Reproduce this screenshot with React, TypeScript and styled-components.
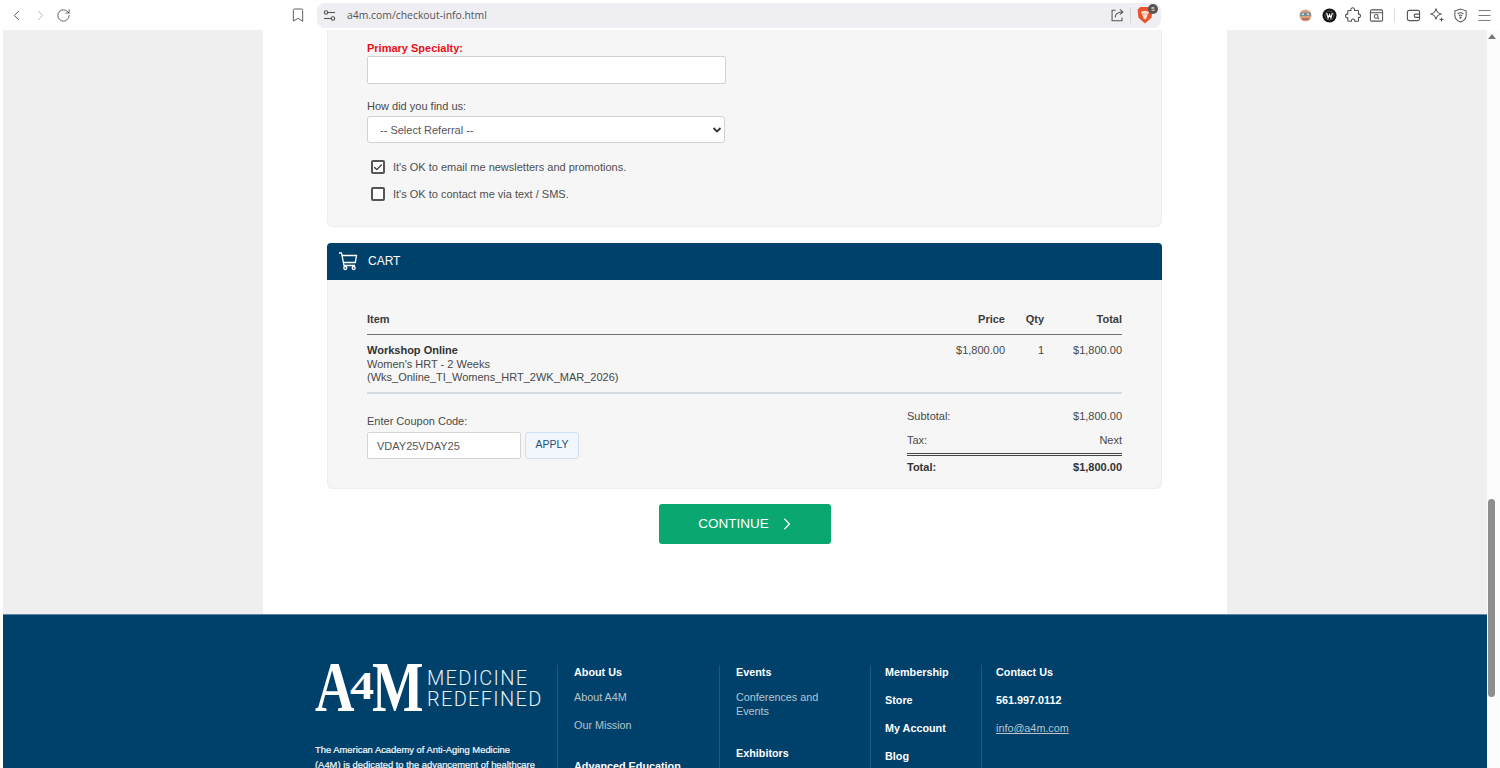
import React from "react";
import styled, { createGlobalStyle } from "styled-components";
import { ChevronLeft, ChevronRight, RotateCw, Bookmark, Menu, Check } from "lucide-react";

const Global = createGlobalStyle`
  html, body { margin: 0; padding: 0; background: #fff; overflow: hidden; }
  * { box-sizing: border-box; }
  body { font-family: "Liberation Sans", Arial, sans-serif; font-size: 11px; color: #484848; }
`;

const Shell = styled.div`
  width: 1500px; height: 768px; overflow: hidden; display: flex; flex-direction: column; background: #fff;
`;
const Toolbar = styled.div`
  height: 30px; flex: none; display: flex; align-items: center; background: #fff; color: #555;
`;
const NavGroup = styled.div`
  display: flex; align-items: center; gap: 6.5px; padding-left: 8px; width: 297px;
`;
const ToolIcon = styled.span<{ $dim?: boolean }>`
  width: 17px; height: 18px; display: flex; align-items: center; justify-content: center; flex: none;
  color: ${p => (p.$dim ? "#b5b5b5" : "#555")};
`;
const BookmarkSlot = styled(ToolIcon)`
  margin-left: auto; margin-right: -9px;
`;
const AddressBar = styled.div`
  width: 844px; height: 25px; margin-left: 20px; background: #eeeef3; border-radius: 8px; display: flex; align-items: center; padding: 0 6px 0 4px;
`;
const Url = styled.span`
  font-family: "Open Sans", "Noto Sans", sans-serif; font-size: 10.4px; color: #555; margin-left: 9px; flex: 1;
`;
const TinySep = styled.span`
  width: 1px; height: 16px; background: #d6d6da; margin: 0 5px 0 4px;
`;
const BraveWrap = styled.span`
  position: relative; width: 18px; height: 18px; display: block; margin-left: 1px;
`;
const BraveBadge = styled.span`
  position: absolute; right: -3px; top: -2px; width: 10px; height: 10px; border-radius: 50%; background: #555; color: #fff; font-size: 6px; line-height: 10px; text-align: center;
`;
const RightGroup = styled.div`
  display: flex; align-items: center; gap: 6.6px; margin-left: 136px;
`;
const Divider = styled.span`
  width: 1px; height: 14px; background: #dcdcdc; margin: 0 3px;
`;

const Body = styled.div`
  flex: 1; display: flex; min-height: 0;
`;
const EdgeStrip = styled.div`
  width: 3px; flex: none; background: #fff;
`;
const Page = styled.div`
  flex: 1; min-width: 0; display: flex; flex-direction: column;
`;
const Scrollbar = styled.div`
  width: 13px; flex: none; background: #fcfcfc; display: flex; flex-direction: column; align-items: center; padding-right: 4px;
`;
const ScrollArrow = styled.span`
  width: 0; height: 0; margin-top: 4px; border-left: 4px solid transparent; border-right: 4px solid transparent; border-bottom: 5px solid #777;
`;
const ScrollThumb = styled.span`
  width: 7px; height: 198px; margin-top: 460px; border-radius: 4px; background: #8e8e8e;
`;
const Backdrop = styled.div`
  height: 584px; background: #efefef; display: flex; justify-content: center; flex: none;
`;
const Content = styled.main`
  width: 964px; background: #fff; padding: 0 65px 0 64px;
`;
const Card = styled.section`
  background: #f6f6f6; border: 1px solid #eeeeee; border-top: 0; border-radius: 0 0 6px 6px; height: 197px; padding: 11px 39px 0;
`;
const Label = styled.label<{ $required?: boolean; $inset?: boolean }>`
  display: block; font-size: 11px; line-height: 14px; color: ${p => (p.$required ? "#e8101a" : "#4a4a4a")}; font-weight: ${p => (p.$required ? 700 : 400)};
  margin-top: ${p => (p.$inset ? "6px" : "0")};
`;
const TextBox = styled.div`
  width: 359px; height: 28px; margin: 1px 0 15px; background: #fff; border: 1px solid #d2d2d2; border-radius: 2px;
`;
const SelectBox = styled.div`
  width: 358px; height: 27px; margin-top: 3px; background: #fff; border: 1px solid #d2d2d2; border-radius: 3px; display: flex; align-items: center; justify-content: space-between; padding: 0 2px 0 12px; color: #555; font-size: 11px;
`;
const CheckRow = styled.div<{ $first?: boolean }>`
  display: flex; align-items: center; gap: 8px; height: 14px; margin: ${p => (p.$first ? "17px" : "13px")} 0 0 4px; font-size: 11px; color: #4f4f4f;
`;
const CheckBox = styled.span`
  width: 14px; height: 14px; border: 2px solid #555; border-radius: 2px; background: #fff; display: flex; align-items: center; justify-content: center; color: #333; flex: none;
`;
const CartHead = styled.div`
  margin-top: 16px; height: 37px; background: #00416b; border-radius: 4px 4px 0 0; display: flex; align-items: center; padding: 0 0 1px 11px; gap: 10px; color: #fff; font-size: 12px;
`;
const CartBody = styled.section`
  background: #f6f6f6; border: 1px solid #eeeeee; border-top: 0; border-radius: 0 0 6px 6px; height: 209px; padding: 32px 39px 0;
`;
const ItemRow = styled.div<{ $head?: boolean }>`
  display: grid; grid-template-columns: 1fr 60px 39px 78px; line-height: 14px;
  ${p => p.$head ? "font-weight: 700; color: #3c3c3c; height: 23px; border-bottom: 1px solid #707070; padding-bottom: 6px; align-items: start;" : "height: 59px; padding-top: 9px; border-bottom: 2px solid #d7dce3; line-height: 13.5px;"}
`;
const Cell = styled.div`
  text-align: right;
`;
const ItemName = styled.strong`
  display: block; color: #333;
`;
const LowerRow = styled.div`
  display: flex; justify-content: space-between; padding-top: 14px;
`;
const Coupon = styled.div``;
const CouponRow = styled.div`
  display: flex; gap: 4px; margin-top: 4px;
`;
const CouponInput = styled.div`
  width: 154px; height: 27px; background: #fff; border: 1px solid #d5d5d5; border-radius: 2px; padding-left: 9px; display: flex; align-items: center; color: #555;
`;
const ApplyButton = styled.button`
  width: 54px; height: 27px; background: #f1f7fc; border: 1px solid #cfe0f0; border-radius: 3px; color: #1f4f74; font: 10.5px "Liberation Sans", Arial, sans-serif; padding: 0 0 4px;
`;
const Totals = styled.div`
  width: 215px; padding-top: 1px;
`;
const TotalRow = styled.div<{ $strong?: boolean }>`
  display: flex; justify-content: space-between; line-height: 14px; height: ${p => (p.$strong ? "auto" : "24px")}; font-weight: ${p => (p.$strong ? 700 : 400)};
  ${p => p.$strong ? "border-top: 3px double #444; padding-top: 4px; color: #333;" : ""}
`;
const Tax = styled(TotalRow)`
  height: 20px;
`;
const ContinueWrap = styled.div`
  display: flex; justify-content: center; margin-top: 15px;
`;
const ContinueButton = styled.button`
  width: 172px; height: 40px; background: #0aa770; border: 0; border-radius: 3px; color: #fff; font: 13.5px "Liberation Sans", Arial, sans-serif; display: flex; align-items: center; justify-content: center; gap: 8px; padding: 0 0 1px 6px;
`;

const Footer = styled.footer`
  flex: 1; background: #00416b; border-top: 1px solid #5d87a5; padding: 50px 0 0 312px; display: flex; align-items: flex-start; color: #fff; overflow: hidden;
`;
const Brand = styled.div`
  width: 242px; flex: none;
`;
const Logo = styled.div`
  display: flex; align-items: center; height: 48px; gap: 4px;
`;
const LogoMark = styled.span`
  position: relative; display: block; width: 108px; height: 48px; flex: none; font-family: "Liberation Serif", serif; font-weight: 700; color: #fff;
`;
const LogoLetter = styled.span<{ $x: number; $size: number; $y: number; $sx: number }>`
  position: absolute; left: ${p => p.$x}px; top: ${p => p.$y}px; font-size: ${p => p.$size}px; line-height: 1; transform: scaleX(${p => p.$sx}); transform-origin: left top;
`;
const LogoWords = styled.span`
  font-family: Roboto, sans-serif; font-weight: 300; font-size: 20px; line-height: 21.5px; letter-spacing: 1.3px; color: #e8eff4; white-space: nowrap;
`;
const BrandText = styled.p`
  margin: 29px 0 0; font-size: 9.4px; line-height: 15px; font-weight: 400; width: 235px; color: #f7fafb; -webkit-text-stroke: 0.2px #f7fafb;
`;
const FootCol = styled.div<{ $w: number; $pad: number }>`
  width: ${p => p.$w}px; flex: none; border-left: 1px solid #1d5a80; padding-left: ${p => p.$pad}px; height: 200px;
`;
const FootHead = styled.div<{ $gap?: number; $before?: number }>`
  font-weight: 700; font-size: 10.8px; line-height: 14px; margin: ${p => p.$before ?? 0}px 0 ${p => p.$gap ?? 11}px; color: #fff;
`;
const FootLink = styled.div<{ $gap?: number; $under?: boolean }>`
  font-size: 10.8px; line-height: 14px; color: #b8c4cc; margin-bottom: ${p => p.$gap ?? 14}px; ${p => p.$under ? "text-decoration: underline;" : ""}
`;

const CartIcon = () => (
  <svg width="20" height="20" viewBox="0 0 20 20" fill="none" stroke="#fff" strokeWidth="1.3"><path d="M1 2h2.500l2.500 12.500h11" /><path d="M4 4.500h14.500l-1.200 7H5.400" /><circle cx="7.300" cy="17" r="1.500" /><circle cx="15.700" cy="17" r="1.500" /></svg>
);
const Tune = () => (
  <svg width="13" height="13" viewBox="0 0 13 13" fill="none" stroke="#555" strokeWidth="1.1"><circle cx="3" cy="3.500" r="1.700" /><path d="M4.700 3.500H12" /><circle cx="10" cy="9.500" r="1.700" /><path d="M1 9.500h7.300" /></svg>
);
const PuzzleBlob = () => (
  <svg width="16" height="16" viewBox="0 0 16 16" fill="none" stroke="#555" strokeWidth="1.1" strokeLinejoin="round"><path d="M6 3.500c-.6-1.700.6-2.700 1.700-2.700s2.300 1 1.700 2.700h3.300c.5 0 .8.300.8.800v2.900c1.500-.4 2 .7 2 1.600s-.5 2-2 1.600v3c0 .5-.3.800-.8.800h-3c.4-1.500-.7-2.200-1.600-2.200s-2 .7-1.600 2.200h-2.900c-.5 0-.8-.3-.8-.8v-2.800c-1.500.4-2.300-.6-2.300-1.700s.8-2.100 2.300-1.700V4.300c0-.5.300-.8.800-.8z" /></svg>
);
const Spark = () => (
  <svg width="16" height="16" viewBox="0 0 16 16" fill="none" stroke="#555" strokeWidth="1.1"><path d="M7 1.500c.5 3 2.500 5 5.500 5.500-3 .5-5 2.500-5.500 5.500C6.500 9.500 4.500 7.500 1.500 7 4.500 6.500 6.500 4.500 7 1.500z" /><path d="M12.500 10.500v4M10.500 12.500h4" /></svg>
);
const Wallet = () => (
  <svg width="15" height="15" viewBox="0 0 16 16" fill="none" stroke="#555" strokeWidth="1.2"><rect x="1.500" y="2.500" width="13" height="11" rx="2" /><path d="M14.500 6.500h-4a1.500 1.500 0 0 0 0 3.500h4" /></svg>
);
const Shield = () => (
  <svg width="15" height="15" viewBox="0 0 16 16" fill="none" stroke="#555" strokeWidth="1.1"><path d="M8 1.200 14 3v5c0 3.500-2.600 5.700-6 7-3.400-1.300-6-3.500-6-7V3z" /><path d="M5 6.500a4.400 4.400 0 0 1 6 0M6.300 8.300a2.500 2.500 0 0 1 3.400 0" /><circle cx="8" cy="10.300" r=".6" fill="#555" /></svg>
);
const TabSearch = () => (
  <svg width="15" height="15" viewBox="0 0 16 16" fill="none" stroke="#555" strokeWidth="1.1"><rect x="1.500" y="2" width="13" height="12" rx="1.500" /><path d="M1.500 5h13" /><circle cx="7.700" cy="9" r="2" /><path d="m9.200 10.500 1.500 1.500" /></svg>
);
const Share = () => (
  <svg width="15" height="15" viewBox="0 0 16 16" fill="none" stroke="#555" strokeWidth="1.1"><path d="M6 2.500H2.200v11h10.600V10" /><path d="M5.500 10c.3-3.500 3-5.700 8-5.700M10.500 1.500l3.300 2.800-3.300 2.700" /></svg>
);
const Brave = () => (
  <svg width="16" height="18" viewBox="0 0 15 17"><path d="M3 1h9l2.500 2.500-.8 7.500-6.200 5.500L1.300 11 .5 3.500z" fill="#e8552a" /><path d="M3.500 5.500 7.500 4.500l4 1-1.500 2.500L8.500 12.500h-2L5 8z" fill="#fff" opacity=".8" /><path d="M6 7.500h.8M8.200 7.500H9" stroke="#e8552a" strokeWidth="1" /></svg>
);
const Avatar = () => (
  <svg width="15" height="15" viewBox="0 0 15 15"><circle cx="7.500" cy="7.500" r="6" fill="#d9a283" /><rect x="2" y="4.500" width="11" height="3.500" rx="1.700" fill="#6e8c99" /><circle cx="5" cy="6.300" r="1" fill="#e9eef0" /><circle cx="10" cy="6.300" r="1" fill="#e9eef0" /><path d="M4 11h7" stroke="#a8604a" strokeWidth="1.4" /></svg>
);
const WBadge = () => (
  <svg width="15" height="15" viewBox="0 0 15 15"><circle cx="7.500" cy="7.500" r="7" fill="#111" /><circle cx="7.500" cy="7.500" r="4.500" fill="none" stroke="#777" strokeWidth=".7" /><path d="m4.700 5 1.400 5 1.400-3.500L8.900 10l1.400-5" fill="none" stroke="#fff" strokeWidth="1.2" /></svg>
);

export default function App() {
  return (
    <Shell>
      <Global />
      <Toolbar>
        <NavGroup>
          <ToolIcon><ChevronLeft size={19} strokeWidth={1.4} /></ToolIcon>
          <ToolIcon $dim><ChevronRight size={19} strokeWidth={1.4} /></ToolIcon>
          <ToolIcon><RotateCw size={15} strokeWidth={1.5} /></ToolIcon>
          <BookmarkSlot><Bookmark size={16} strokeWidth={1.4} /></BookmarkSlot>
        </NavGroup>
        <AddressBar>
          <ToolIcon><Tune /></ToolIcon>
          <Url>a4m.com/checkout-info.html</Url>
          <ToolIcon><Share /></ToolIcon>
          <TinySep />
          <BraveWrap><Brave /><BraveBadge>5</BraveBadge></BraveWrap>
        </AddressBar>
        <RightGroup>
          <ToolIcon><Avatar /></ToolIcon>
          <ToolIcon><WBadge /></ToolIcon>
          <ToolIcon><PuzzleBlob /></ToolIcon>
          <ToolIcon><TabSearch /></ToolIcon>
          <Divider />
          <ToolIcon><Wallet /></ToolIcon>
          <ToolIcon><Spark /></ToolIcon>
          <ToolIcon><Shield /></ToolIcon>
          <ToolIcon><Menu size={19} strokeWidth={1.1} /></ToolIcon>
        </RightGroup>
      </Toolbar>
      <Body>
        <EdgeStrip />
        <Page>
          <Backdrop>
            <Content>
              <Card>
                <Label $required>Primary Specialty:</Label>
                <TextBox />
                <Label>How did you find us:</Label>
                <SelectBox>
                  <span>-- Select Referral --</span>
                  <svg width="10" height="10" viewBox="0 0 10 10" fill="none" stroke="#333" strokeWidth="1.8"><path d="m1.500 3 3.500 3.500L8.500 3" /></svg>
                </SelectBox>
                <CheckRow $first>
                  <CheckBox><Check size={11} strokeWidth={3} /></CheckBox>
                  It's OK to email me newsletters and promotions.
                </CheckRow>
                <CheckRow>
                  <CheckBox />
                  It's OK to contact me via text / SMS.
                </CheckRow>
              </Card>
              <CartHead>
                <CartIcon />
                CART
              </CartHead>
              <CartBody>
                <ItemRow $head>
                  <div>Item</div>
                  <Cell>Price</Cell>
                  <Cell>Qty</Cell>
                  <Cell>Total</Cell>
                </ItemRow>
                <ItemRow>
                  <div>
                    <ItemName>Workshop Online</ItemName>
                    Women's HRT - 2 Weeks<br />
                    (Wks_Online_TI_Womens_HRT_2WK_MAR_2026)
                  </div>
                  <Cell>$1,800.00</Cell>
                  <Cell>1</Cell>
                  <Cell>$1,800.00</Cell>
                </ItemRow>
                <LowerRow>
                  <Coupon>
                    <Label $inset>Enter Coupon Code:</Label>
                    <CouponRow>
                      <CouponInput>VDAY25VDAY25</CouponInput>
                      <ApplyButton>APPLY</ApplyButton>
                    </CouponRow>
                  </Coupon>
                  <Totals>
                    <TotalRow><span>Subtotal:</span><span>$1,800.00</span></TotalRow>
                    <Tax><span>Tax:</span><span>Next</span></Tax>
                    <TotalRow $strong><span>Total:</span><span>$1,800.00</span></TotalRow>
                  </Totals>
                </LowerRow>
              </CartBody>
              <ContinueWrap>
                <ContinueButton>CONTINUE <ChevronRight size={20} strokeWidth={1.4} /></ContinueButton>
              </ContinueWrap>
            </Content>
          </Backdrop>
          <Footer>
            <Brand>
              <Logo>
                <LogoMark>
                  <LogoLetter $x={0} $y={-13} $size={71} $sx={0.77}>A</LogoLetter>
                  <LogoLetter $x={35} $y={1} $size={40} $sx={1.2}>4</LogoLetter>
                  <LogoLetter $x={57} $y={-13} $size={71} $sx={0.77}>M</LogoLetter>
                </LogoMark>
                <LogoWords>MEDICINE<br />REDEFINED</LogoWords>
              </Logo>
              <BrandText>The American Academy of Anti-Aging Medicine<br />(A4M) is dedicated to the advancement of healthcare</BrandText>
            </Brand>
            <FootCol $w={162} $pad={16}>
              <FootHead>About Us</FootHead>
              <FootLink>About A4M</FootLink>
              <FootLink>Our Mission</FootLink>
              <FootHead $before={27}>Advanced Education</FootHead>
            </FootCol>
            <FootCol $w={151} $pad={16}>
              <FootHead>Events</FootHead>
              <FootLink $gap={28}>Conferences and<br />Events</FootLink>
              <FootHead>Exhibitors</FootHead>
            </FootCol>
            <FootCol $w={111} $pad={14}>
              <FootHead $gap={14}>Membership</FootHead>
              <FootHead $gap={14}>Store</FootHead>
              <FootHead $gap={14}>My Account</FootHead>
              <FootHead $gap={14}>Blog</FootHead>
            </FootCol>
            <FootCol $w={130} $pad={14}>
              <FootHead $gap={14}>Contact Us</FootHead>
              <FootHead $gap={14}>561.997.0112</FootHead>
              <FootLink $under>info@a4m.com</FootLink>
            </FootCol>
          </Footer>
        </Page>
        <Scrollbar>
          <ScrollArrow />
          <ScrollThumb />
        </Scrollbar>
      </Body>
    </Shell>
  );
}
